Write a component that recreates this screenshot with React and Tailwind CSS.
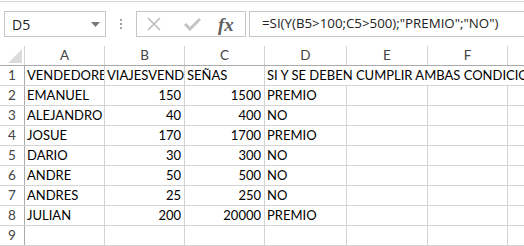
const cols = [
  { key: "A", w: "w-[80px]" },
  { key: "B", w: "w-[80px]" },
  { key: "C", w: "w-[80px]" },
  { key: "D", w: "w-[82px]" },
  { key: "E", w: "w-[81px]" },
  { key: "F", w: "w-[80px]" },
  { key: "G", w: "w-[80px]" },
];

const rows = [
  ["VENDEDORES", "VIAJESVENDIDOS", "SEÑAS", "SI Y SE DEBEN CUMPLIR AMBAS CONDICIONES"],
  ["EMANUEL", "150", "1500", "PREMIO"],
  ["ALEJANDRO", "40", "400", "NO"],
  ["JOSUE", "170", "1700", "PREMIO"],
  ["DARIO", "30", "300", "NO"],
  ["ANDRE", "50", "500", "NO"],
  ["ANDRES", "25", "250", "NO"],
  ["JULIAN", "200", "20000", "PREMIO"],
  ["", "", "", ""],
];

const Toolbar = () => (
  <div className="flex items-center h-[26px] mt-[9px]">
    <div className="ml-[4px] w-[102px] h-[26px] border border-[#c6c6c6] flex items-center justify-between pl-[7px] pr-[5px]">
      <span className="text-[14px] text-[#222]">D5</span>
      <svg width="9" height="5" viewBox="0 0 9 5">
        <path d="M0 0 L9 0 L4.5 5 Z" fill="#7a7a7a" />
      </svg>
    </div>
    <div className="w-[30px] flex flex-col items-center gap-[2px]">
      <div className="w-[2px] h-[2px] bg-[#a0a0a0]" />
      <div className="w-[2px] h-[2px] bg-[#a0a0a0]" />
      <div className="w-[2px] h-[2px] bg-[#a0a0a0]" />
    </div>
    <div className="w-[110px] h-[26px] border border-[#c6c6c6] flex items-center pl-[10px]">
      <svg width="14" height="14" viewBox="0 0 14 14">
        <path d="M1 1 L13 13 M13 1 L1 13" stroke="#bdbdbd" strokeWidth="1.6" />
      </svg>
      <svg width="17" height="14" viewBox="0 0 17 14" className="ml-[23px]">
        <path d="M1 7 L6 12 L16 2" stroke="#c4c4c4" strokeWidth="3" fill="none" />
      </svg>
      <span className="ml-[17px] text-[19px] italic font-semibold text-[#606060] leading-none" style={{ fontFamily: '"Liberation Serif", serif' }}>
        fx
      </span>
    </div>
    <div className="ml-[3px] flex-1 h-[26px] border-l border-t border-b border-[#c6c6c6] flex items-center pl-[12px] overflow-hidden whitespace-nowrap">
      <span className="text-[13.3px] text-[#222]">=SI(Y(B5&gt;100;C5&gt;500);"PREMIO";"NO")</span>
    </div>
  </div>
);

const cell = "shrink-0 overflow-hidden whitespace-nowrap text-[13px] text-black flex items-center";

const App = () => {
  return (
    <div className="w-[524px] h-[246px] bg-white overflow-hidden" style={{ fontFamily: '"Open Sans", sans-serif' }}>
      <div className="h-px mt-px bg-[#d6d6d6]" />
      <Toolbar />

      <div className="mt-[9px]" style={{ fontFamily: "Lato, sans-serif" }}>
        {/* column header */}
        <div className="flex h-[20px] border-b border-[#ababab]">
          <div className="w-[25px] shrink-0 border-r border-[#d4d4d4] relative">
            <svg width="14" height="14" viewBox="0 0 14 14" className="absolute right-[2px] bottom-[2px]">
              <path d="M14 0 L14 14 L0 14 Z" fill="#dcdcdc" />
            </svg>
          </div>
          {cols.map((c) => (
            <div
              key={c.key}
              className={`${c.w} shrink-0 border-r border-[#d4d4d4] flex items-center justify-center text-[13.5px] text-[#444]`}
            >
              {c.key}
            </div>
          ))}
        </div>

        {rows.map((r, i) => (
          <div key={i} className="flex h-[20px] border-b border-[#d4d4d4]">
            <div className="w-[25px] shrink-0 border-r border-[#ababab] flex items-center justify-center text-[13.5px] text-[#444]">
              {i + 1}
            </div>
            <div className={`w-[80px] border-r border-[#d4d4d4] pl-[2px] ${cell}`}>{r[0]}</div>
            <div className={`w-[80px] border-r border-[#d4d4d4] ${cell} ${i === 0 ? "pl-[2px]" : "justify-end pr-[3px]"}`}>
              {r[1]}
            </div>
            <div className={`w-[80px] border-r border-[#d4d4d4] ${cell} ${i === 0 ? "pl-[2px]" : "justify-end pr-[3px]"}`}>
              {r[2]}
            </div>
            {i === 0 ? (
              <div className={`w-[323px] pl-[2px] ${cell}`}>{r[3]}</div>
            ) : (
              <>
                <div className={`w-[82px] border-r border-[#d4d4d4] pl-[2px] ${cell}`}>{r[3]}</div>
                <div className="w-[81px] shrink-0 border-r border-[#d4d4d4]" />
                <div className="w-[80px] shrink-0 border-r border-[#d4d4d4]" />
                <div className="w-[80px] shrink-0 border-r border-[#d4d4d4]" />
              </>
            )}
          </div>
        ))}
      </div>
    </div>
  );
};

export default App;
